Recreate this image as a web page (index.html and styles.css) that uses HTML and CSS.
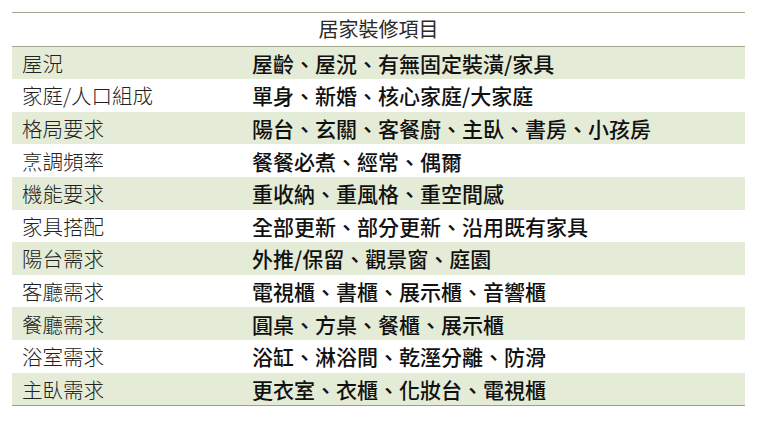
FILE: index.html
```html
<!DOCTYPE html>
<html lang="zh-Hant">
<head>
<meta charset="utf-8">
<link rel="stylesheet" href="styles.css">
</head>
<body>
<table class="plan">
  <thead>
    <tr><th colspan="2" class="title">居家裝修項目</th></tr>
  </thead>
  <tbody>
    <tr class="alt"><td class="key">屋況</td><td class="val">屋齡、屋況、有無固定裝潢/家具</td></tr>
    <tr><td class="key">家庭/人口組成</td><td class="val">單身、新婚、核心家庭/大家庭</td></tr>
    <tr class="alt"><td class="key">格局要求</td><td class="val">陽台、玄關、客餐廚、主臥、書房、小孩房</td></tr>
    <tr><td class="key">烹調頻率</td><td class="val">餐餐必煮、經常、偶爾</td></tr>
    <tr class="alt"><td class="key">機能要求</td><td class="val">重收納、重風格、重空間感</td></tr>
    <tr><td class="key">家具搭配</td><td class="val">全部更新、部分更新、沿用既有家具</td></tr>
    <tr class="alt"><td class="key">陽台需求</td><td class="val">外推/保留、觀景窗、庭園</td></tr>
    <tr><td class="key">客廳需求</td><td class="val">電視櫃、書櫃、展示櫃、音響櫃</td></tr>
    <tr class="alt"><td class="key">餐廳需求</td><td class="val">圓桌、方桌、餐櫃、展示櫃</td></tr>
    <tr><td class="key">浴室需求</td><td class="val">浴缸、淋浴間、乾溼分離、防滑</td></tr>
    <tr class="alt"><td class="key">主臥需求</td><td class="val">更衣室、衣櫃、化妝台、電視櫃</td></tr>
  </tbody>
</table>
</body>
</html>
```

FILE: styles.css
```css
html, body {
  margin: 0;
  padding: 0;
  background: #ffffff;
}
body {
  padding: 12px 0 0 12px;
  font-family: "Noto Sans CJK TC", "Noto Sans", sans-serif;
  color: #1c1c1c;
}
.plan {
  width: 733px;
  border-collapse: collapse;
  border-top: 1px solid #a3a88f;
  border-bottom: 1px solid #98a57c;
}
.plan th, .plan td {
  padding: 0;
  height: 32.6px;
  line-height: 30px;
  white-space: nowrap;
}
.title {
  font-weight: normal;
  font-size: 20px;
  text-align: center;
  color: #2a2a2a;
  border-bottom: 1px solid #a3a88f;
}
.key {
  width: 230px;
  padding-left: 10px !important;
  font-size: 20.5px;
  font-weight: 300;
  color: #222;
}
.val {
  font-size: 21px;
  font-weight: 500;
  color: #111;
}
.alt td {
  background: #e4ebd6;
}
```
